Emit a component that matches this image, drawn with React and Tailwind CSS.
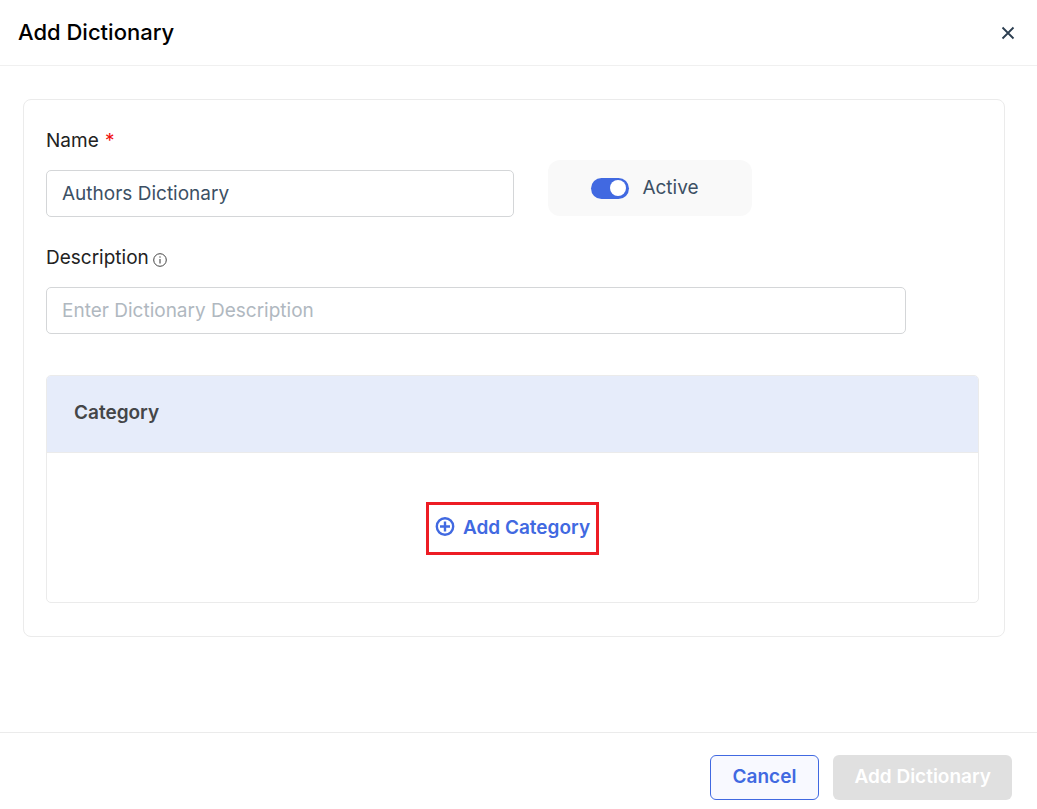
import { useState } from "react";

const inputClass =
  "w-full h-[47px] rounded-[5px] border border-[#d4d6d8] bg-white px-[15px] text-[19px] font-normal text-[#3c5064] placeholder:text-[#b0b8c0] outline-none focus:border-[#4169e1]";

function CloseIcon() {
  return (
    <svg width="14" height="14" viewBox="0 0 14 14" fill="none" stroke="#2c3e50" strokeWidth="1.8" aria-hidden="true">
      <path d="M1.5 1.5l11 11M12.5 1.5l-11 11" />
    </svg>
  );
}

function InfoIcon() {
  return (
    <svg width="14" height="14" viewBox="0 0 14 14" fill="none" stroke="#444" aria-hidden="true">
      <circle cx="7" cy="7" r="6.3" strokeWidth="1" />
      <path d="M7 6v4.4" strokeWidth="1.1" />
      <circle cx="7" cy="4" r="0.7" fill="#444" stroke="none" />
    </svg>
  );
}

function PlusCircleIcon() {
  return (
    <svg width="20" height="22" viewBox="0 0 20 22" fill="none" stroke="currentColor" strokeWidth="2.4" aria-hidden="true">
      <circle cx="10" cy="9.5" r="8.2" />
      <path d="M10 4.5v10M5 9.5h10" />
    </svg>
  );
}

function ActiveSwitch({ checked, onChange }) {
  return (
    <label className="mb-px flex h-14 w-[204px] shrink-0 items-center justify-center gap-[13px] rounded-xl bg-[#f9f9f9] pr-[10px] text-[19px] leading-7 font-normal text-[#3c5064]">
      <input type="checkbox" role="switch" className="peer sr-only" checked={checked} onChange={onChange} />
      <span className="flex h-[21px] w-[38px] items-center rounded-full bg-gray-300 px-[3px] peer-checked:justify-end peer-checked:bg-[#4169e1]">
        <span className="h-4 w-4 rounded-full bg-white" />
      </span>
      Active
    </label>
  );
}

export default function App() {
  const [name, setName] = useState("Authors Dictionary");
  const [description, setDescription] = useState("");
  const [active, setActive] = useState(true);

  return (
    <div className="flex min-h-screen flex-col bg-white font-[Inter,sans-serif]">
      <header className="flex items-center justify-between border-b border-[#f0f0f0] py-4 pr-[22px] pl-[18px]">
        <h1 className="text-[22px] leading-[33px] font-medium text-black">Add Dictionary</h1>
        <button type="button" aria-label="Close">
          <CloseIcon />
        </button>
      </header>

      <main className="flex-1 pt-[33px] pr-8 pb-8 pl-[23px]">
        <section className="rounded-lg border border-[#ebebeb] pt-[26px] pr-[25px] pb-[33px] pl-[22px]">
          <div className="flex items-end gap-[34px]">
            <div className="w-full max-w-[468px]">
              <label htmlFor="name" className="mb-[14px] block text-[19px] leading-[30px] font-normal text-[#222]">
                Name <span className="ml-px text-[#f01010]">*</span>
              </label>
              <input id="name" type="text" className={inputClass} value={name} onChange={(e) => setName(e.target.value)} />
            </div>
            <ActiveSwitch checked={active} onChange={(e) => setActive(e.target.checked)} />
          </div>

          <div className="mt-[26px] max-w-[860px]">
            <label htmlFor="description" className="mb-[14px] flex items-center gap-1 text-[19px] leading-[30px] font-normal text-[#222]">
              Description
              <span className="pt-1">
                <InfoIcon />
              </span>
            </label>
            <input
              id="description"
              type="text"
              className={inputClass}
              placeholder="Enter Dictionary Description"
              value={description}
              onChange={(e) => setDescription(e.target.value)}
            />
          </div>

          <div className="mt-[41px] overflow-hidden rounded-[5px] border border-[#ebebeb]">
            <table className="w-full">
              <thead>
                <tr className="border-b border-[#ebebeb] bg-[#e6ecfa]">
                  <th className="px-[27px] pt-[23px] pb-[25px] text-left text-[19px] leading-7 font-semibold text-[#444648]">Category</th>
                </tr>
              </thead>
              <tbody>
                <tr>
                  <td className="px-[27px] pt-[49px] pb-[47px] text-center">
                    <button
                      type="button"
                      className="inline-flex h-[53px] items-center gap-2 border-3 border-[#ed1c24] px-[6px] pb-[2px] text-[19px] leading-7 font-semibold text-[#4169e1]"
                    >
                      <PlusCircleIcon />
                      Add Category
                    </button>
                  </td>
                </tr>
              </tbody>
            </table>
          </div>
        </section>
      </main>

      <footer className="flex justify-end gap-[14px] border-t border-[#ebebeb] pt-[22px] pr-[25px] pb-[9px]">
        <button
          type="button"
          className="h-[45px] rounded-md border border-[#4169e1] bg-[#f8f9ff] px-[22px] pb-[2px] text-[19px] leading-7 font-semibold text-[#4169e1]"
        >
          Cancel
        </button>
        <button type="button" disabled className="h-[45px] rounded-md bg-[#e0e0e0] px-[21px] pb-[2px] text-[19px] leading-7 font-semibold text-white">
          Add Dictionary
        </button>
      </footer>
    </div>
  );
}
